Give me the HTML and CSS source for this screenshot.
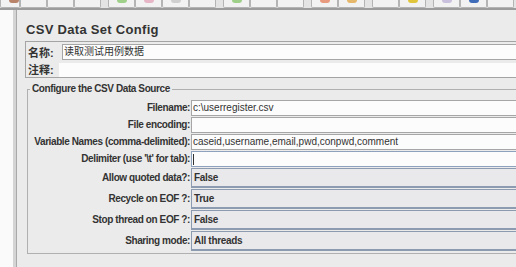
FILE: index.html
```html
<!DOCTYPE html>
<html>
<head>
  <title>CSV Data Set Config</title>
  <link rel="stylesheet" href="styles.css">
</head>
<body>
  <div class="toolbar">
    <span class="tool tool-first"><i class="ico brown"></i></span>
    <span class="tool"></span>
    <span class="tool"></span>
    <span class="tool"></span>
    <span class="sep"></span>
    <span class="tool"><i class="ico green"></i></span>
    <span class="tool"><i class="ico pink"></i></span>
    <span class="tool"><i class="ico grey"></i></span>
    <span class="tool"></span>
    <span class="sep"></span>
    <span class="tool"><i class="ico green"></i></span>
    <span class="tool"></span>
    <span class="tool"></span>
    <span class="sep"></span>
    <span class="tool"><i class="ico red"></i></span>
    <span class="tool"><i class="ico orange"></i></span>
    <span class="sep"></span>
    <span class="tool"></span>
    <span class="tool"><i class="ico yellow"></i></span>
    <span class="sep"></span>
    <span class="tool"><i class="ico lilac"></i></span>
    <span class="tool"><i class="ico blue"></i></span>
    <span class="tool"></span>
  </div>

  <div class="main">
    <div class="tree"></div>
    <div class="splitter"></div>

    <div class="panel">
      <h1>CSV Data Set Config</h1>

      <div class="namebox">
        <div class="namerow">
          <label>名称:</label>
          <div class="field name-field">读取测试用例数据</div>
        </div>
        <div class="namerow">
          <label>注释:</label>
          <div class="field comment-field"></div>
        </div>
      </div>

      <fieldset class="source">
        <legend>Configure the CSV Data Source</legend>
        <div class="form">
          <label>Filename:</label>
          <div class="field">c:\userregister.csv</div>

          <label>File encoding:</label>
          <div class="field"></div>

          <label>Variable Names (comma-delimited):</label>
          <div class="field">caseid,username,email,pwd,conpwd,comment</div>

          <label>Delimiter (use '\t' for tab):</label>
          <div class="field focused"><span class="caret"></span></div>

          <label class="combo-label">Allow quoted data?:</label>
          <div class="combo">False</div>

          <label class="combo-label">Recycle on EOF ?:</label>
          <div class="combo">True</div>

          <label class="combo-label">Stop thread on EOF ?:</label>
          <div class="combo">False</div>

          <label class="combo-label">Sharing mode:</label>
          <div class="combo">All threads</div>
        </div>
      </fieldset>
    </div>
  </div>
</body>
</html>
```

FILE: styles.css
```css
body {
  margin: 0;
  width: 516px;
  height: 267px;
  overflow: hidden;
  background-color: #ebebeb;
  font-family: 'Liberation Sans', 'Noto Sans CJK SC', sans-serif;
  color: #333;
}

.toolbar {
  display: flex;
  height: 8px;
  padding-left: 10px;
  background-color: #e4e4e4;
  border-bottom: 2px solid #9c9c9c;
  overflow: hidden;
}

.tool {
  position: relative;
  width: 25px;
  height: 7px;
  border: 1px solid #b4b4b4;
  border-top: none;
  border-radius: 0 0 2px 2px;
  background-color: #f2f2f2;
  flex-shrink: 0;
}

.tool-first {
  margin-left: -10px;
  width: 18px;
}

.sep {
  width: 7px;
  flex-shrink: 0;
}

.ico {
  position: absolute;
  left: 8px;
  top: 0;
  width: 10px;
  height: 3px;
  border-radius: 0 0 3px 3px;
}

.brown { background-color: #b9836a; }
.green { background-color: #9fd08a; }
.pink { background-color: #e7b6c6; }
.grey { background-color: #cfcfcf; }
.red { background-color: #e89a7e; }
.orange { background-color: #e6b86b; }
.yellow { background-color: #e0c53a; }
.lilac { background-color: #c8c0dc; }
.blue { background-color: #3f6cb8; }

.main {
  display: flex;
  height: 257px;
}

.tree {
  width: 13px;
  background-color: #fafafa;
  flex-shrink: 0;
}

.splitter {
  width: 3px;
  border-right: 1px solid #a9a9a9;
  background-image: radial-gradient(#b8b8b8 0.6px, transparent 0.8px);
  background-size: 2px 2px;
  background-color: #ececec;
  flex-shrink: 0;
}

.panel {
  flex: 1;
  min-width: 0;
  padding: 0 0 0 8px;
  background-color: #ebebeb;
}

h1 {
  margin: 9px 0 0 1px;
  height: 22px;
  font-size: 13px;
  letter-spacing: 0.3px;
  line-height: 22px;
  font-weight: bold;
  color: #333;
}

.namebox {
  border: 1px solid #a4a4a4;
  border-right: none;
  padding: 1px 0 0 1px;
  height: 34px;
}

.namerow {
  display: flex;
  align-items: center;
  height: 17px;
}

.namerow label {
  width: 34px;
  padding-left: 1px;
  font-size: 11px;
  font-weight: bold;
}

.field {
  box-sizing: border-box;
  height: 16px;
  border: 1px solid #a6a6a6;
  border-right: none;
  background-color: #fcfcfc;
  font-size: 10px;
  line-height: 14px;
  padding-left: 1px;
  white-space: nowrap;
  overflow: hidden;
}

.name-field {
  flex: 1;
  padding-left: 1px;
}

.comment-field {
  flex: 1;
  margin-left: -3px;
  height: 14px;
  border: none;
  margin-top: 3px;
}

.source {
  margin: 5px 0 0 2px;
  padding: 0 0 2px 0;
  border: 1px solid #b0b0b0;
  border-right: none;
}

.source legend {
  margin-left: 2px;
  padding: 0 2px;
  font-size: 10px;
  letter-spacing: -0.4px;
  font-weight: bold;
  line-height: 12px;
}

.form {
  display: grid;
  grid-template-columns: 163px 1fr;
  grid-template-rows: repeat(4, 16px) repeat(4, 20px);
  row-gap: 1px;
  margin-top: 5px;
}

.form label {
  text-align: right;
  font-size: 10px;
  letter-spacing: -0.4px;
  font-weight: bold;
  line-height: 16px;
  padding-right: 1px;
  white-space: nowrap;
}

.focused {
  border-color: #8fa2bd;
}

.caret {
  display: inline-block;
  width: 1px;
  height: 11px;
  margin-top: 2px;
  background-color: #333;
  vertical-align: top;
}

.form .combo-label {
  line-height: 20px;
}

.combo {
  box-sizing: border-box;
  height: 20px;
  border: 1px solid #8d9bb0;
  border-right: none;
  border-bottom: 2px solid #8d9bb0;
  background-color: #e9e9ec;
  font-size: 10px;
  letter-spacing: -0.3px;
  font-weight: bold;
  line-height: 17px;
  padding-left: 2px;
}
```
